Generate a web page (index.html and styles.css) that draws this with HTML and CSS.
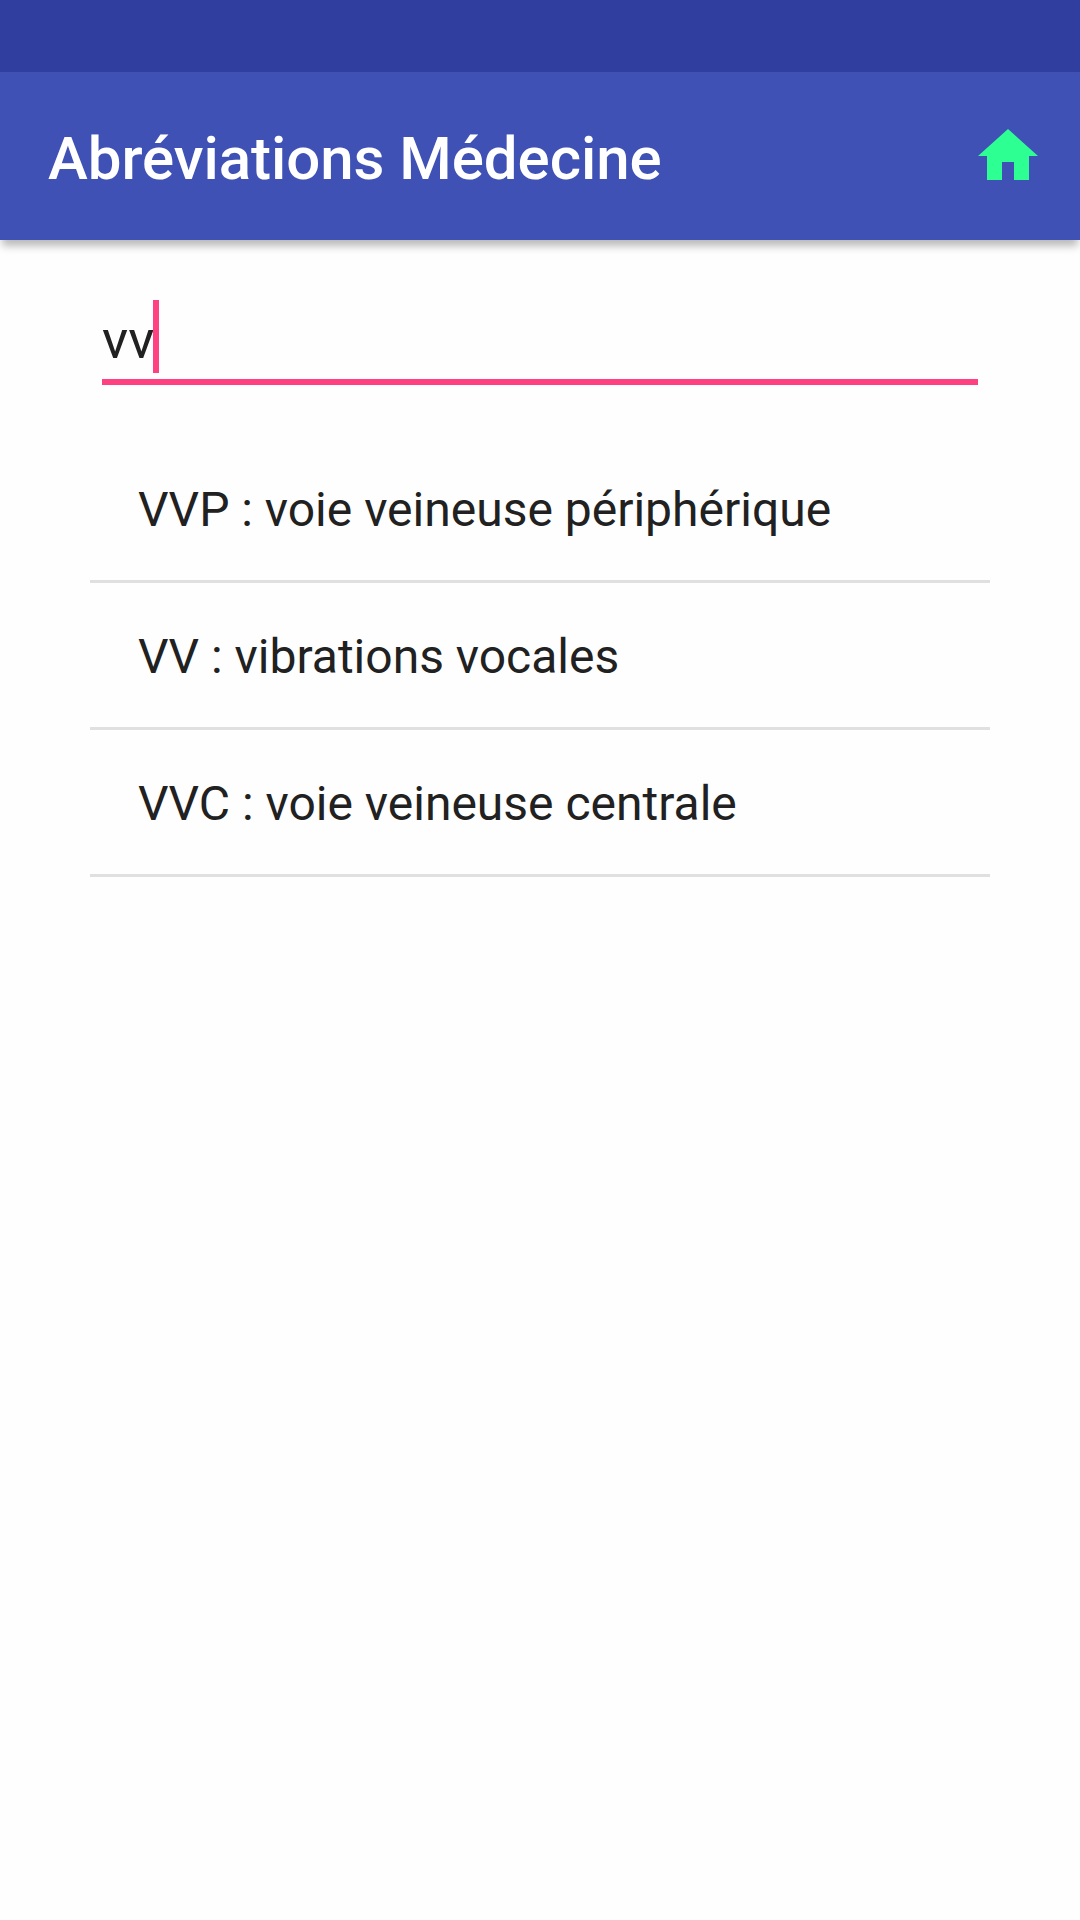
FILE: index.html
```html
<!DOCTYPE html>
<html lang="fr">
<head>
<meta charset="utf-8">
<title>Abréviations Médecine</title>
<link rel="stylesheet" href="styles.css">
</head>
<body>
<div class="status-bar"></div>
<header class="app-bar">
  <h1 class="title">Abréviations Médecine</h1>
  <svg class="home" viewBox="0 0 24 24" aria-label="Accueil"><path d="M10 20v-6h4v6h5v-8h3L12 3 2 12h3v8z"/></svg>
</header>
<main class="content">
  <div class="search"><span class="query">vv</span><span class="caret"></span></div>
  <ul class="results">
    <li class="result">VVP : voie veineuse périphérique</li>
    <li class="result">VV : vibrations vocales</li>
    <li class="result">VVC : voie veineuse centrale</li>
  </ul>
</main>
</body>
</html>
```
FILE: styles.css
```css
* { box-sizing: border-box; }
body {
  margin: 0;
  min-height: 1920px;
  background: #fefefe;
  color: #212121;
  font-family: Roboto, sans-serif;
}
.status-bar { height: 72px; background: #303f9f; }
.app-bar {
  display: flex;
  align-items: center;
  justify-content: space-between;
  height: 168px;
  padding: 0 36px 0 48px;
  background: #3f51b5;
  box-shadow: 0 8px 8px -2px rgba(0, 0, 0, .27);
}
.title {
  margin: 6px 0 0;
  color: #fff;
  font-size: 60px;
  font-weight: 500;
  line-height: 70px;
  letter-spacing: -.04px;
  white-space: nowrap;
}
.home { width: 72px; height: 72px; fill: #2eff93; }
.content { padding: 60px 90px 0; }
.search {
  display: flex;
  height: 85px;
  margin: 0 12px;
  border-bottom: 6px solid #ff4081;
}
.query { width: 51px; font-size: 54px; line-height: 79px; }
.caret { width: 6px; height: 73px; background: #ff4081; }
.results { margin: 51px 0 0; padding: 0; list-style: none; }
.result {
  height: 147px;
  padding: 2px 0 0 48px;
  border-bottom: 3px solid #e0e0e0;
  font-size: 48px;
  line-height: 144px;
}
```
